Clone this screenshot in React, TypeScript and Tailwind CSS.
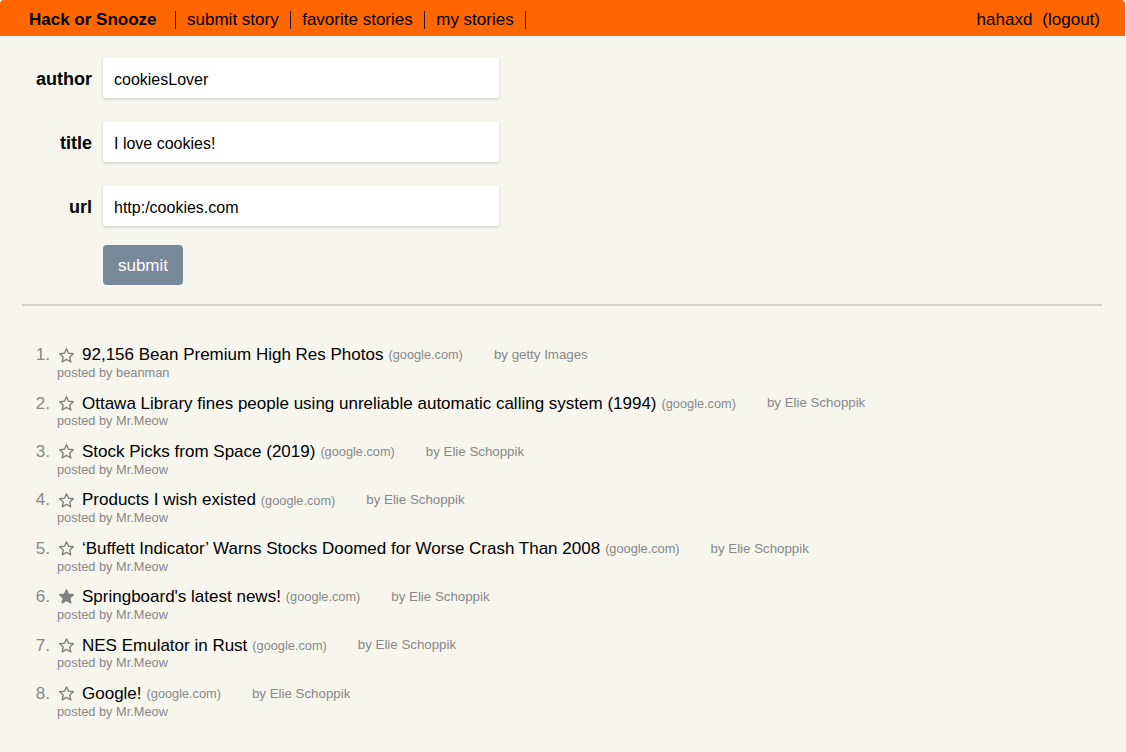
import React from 'react';

const STORIES = [
  { title: '92,156 Bean Premium High Res Photos', author: 'getty Images', user: 'beanman', fav: false },
  { title: 'Ottawa Library fines people using unreliable automatic calling system (1994)', author: 'Elie Schoppik', user: 'Mr.Meow', fav: false },
  { title: 'Stock Picks from Space (2019)', author: 'Elie Schoppik', user: 'Mr.Meow', fav: false },
  { title: 'Products I wish existed', author: 'Elie Schoppik', user: 'Mr.Meow', fav: false },
  { title: '\u2018Buffett Indicator\u2019 Warns Stocks Doomed for Worse Crash Than 2008', author: 'Elie Schoppik', user: 'Mr.Meow', fav: false },
  { title: "Springboard's latest news!", author: 'Elie Schoppik', user: 'Mr.Meow', fav: true },
  { title: 'NES Emulator in Rust', author: 'Elie Schoppik', user: 'Mr.Meow', fav: false },
  { title: 'Google!', author: 'Elie Schoppik', user: 'Mr.Meow', fav: false },
];

const FIELDS = [
  { label: 'author', value: 'cookiesLover' },
  { label: 'title', value: 'I love cookies!' },
  { label: 'url', value: 'http:/cookies.com' },
];

function Star({ filled }: { filled: boolean }) {
  return (
    <svg width="17" height="17" viewBox="0 0 24 24" className="shrink-0">
      <path
        d="M12 2.5l2.9 6.3 6.9.7-5.2 4.6 1.5 6.8L12 17.4l-6.1 3.5 1.5-6.8-5.2-4.6 6.9-.7z"
        fill={filled ? '#808080' : 'none'}
        stroke="#808080"
        strokeWidth="1.9"
        strokeLinejoin="round"
      />
    </svg>
  );
}

function Sep({ left = 11 }: { left?: number }) {
  return (
    <span
      className={`${left === 18 ? 'ml-[18px]' : 'ml-[11px]'} mr-[11px] inline-block h-[18px] w-[1.5px] bg-[#1a1a1a]`}
    />
  );
}

export default function App() {
  return (
    <div className="min-h-[752px] w-full bg-[#f6f6ef] font-['Liberation_Sans',Arial,sans-serif] text-black">
      {/* Nav */}
      <nav className="flex h-9 w-[1125px] items-center justify-between rounded-t-[4px] bg-[#ff6600] pl-[29px] pr-[25px] pt-[4px] text-[17px]">
        <div className="flex items-center">
          <span className="font-bold">Hack or Snooze</span>
          <Sep left={18} />
          <span>submit story</span>
          <Sep />
          <span>favorite stories</span>
          <Sep />
          <span>my stories</span>
          <Sep />
        </div>
        <div className="flex items-center gap-[10px]">
          <span>hahaxd</span>
          <span>(logout)</span>
        </div>
      </nav>

      {/* Submit form */}
      <form className="flex flex-col pt-[22px] pl-[22px]">
        {FIELDS.map((f) => (
          <div key={f.label} className="mb-[24px] flex h-10 items-center">
            <label className="w-[70px] pt-[2px] text-right text-[18px] font-bold">{f.label}</label>
            <input
              readOnly
              value={f.value}
              className="ml-[11px] h-10 w-[396px] rounded-[2px] bg-white pl-[11px] pt-[3px] text-[16px] text-black shadow-[0_1px_3px_rgba(0,0,0,0.18)] outline-none"
            />
          </div>
        ))}
        <div className="-mt-[5px] pl-[81px]">
          <button
            type="button"
            className="h-10 w-20 rounded-[4px] bg-[#778899] pt-[2px] text-[17px] text-white"
          >
            submit
          </button>
        </div>
      </form>

      <hr className="mx-[22px] mt-[19px] w-[1080px] border-t-2 border-[#d3d3d3]" />

      {/* Stories */}
      <ol className="pt-[39px]">
        {STORIES.map((s, i) => (
          <li key={i} className="mb-[12.4px] flex flex-col">
            <div className="flex h-5 items-center whitespace-nowrap">
              <span className="w-[50px] text-right text-[17px] text-[#888]">{i + 1}.</span>
              <span className="ml-[8px] mr-[7px] flex items-center">
                <Star filled={s.fav} />
              </span>
              <span className="text-[17px]">{s.title}</span>
              <span className="ml-[5px] text-[12.75px] text-[#888]">(google.com)</span>
              <span className="ml-[31px] text-[13.3px] text-[#888]">by {s.author}</span>
            </div>
            <div className="h-4 pl-[57px] text-[12.8px] leading-4 text-[#888]">posted by {s.user}</div>
          </li>
        ))}
      </ol>
    </div>
  );
}
